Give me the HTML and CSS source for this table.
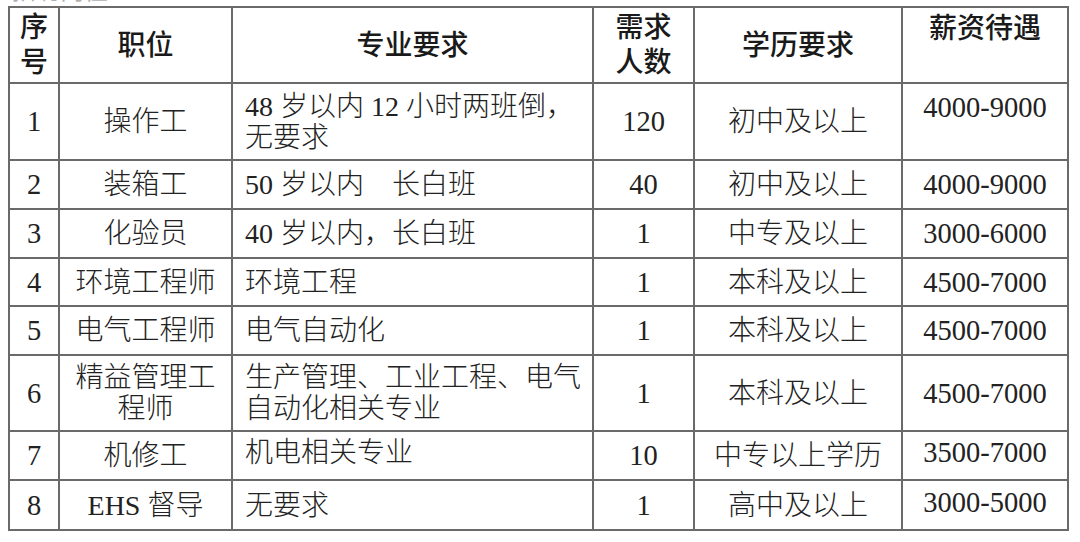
FILE: index.html
```html
<!DOCTYPE html>
<html lang="zh-CN">
<head>
<meta charset="utf-8">
<title>招聘岗位</title>
<link rel="stylesheet" href="styles.css">
</head>
<body>
<div class="caption"><span class="caption-text">招聘岗位：</span></div>
<table class="jobs">
  <colgroup>
    <col class="c-no"><col class="c-pos"><col class="c-req"><col class="c-num"><col class="c-edu"><col class="c-pay">
  </colgroup>
  <thead>
    <tr class="h-tall">
      <th class="stack">序<br>号</th>
      <th>职位</th>
      <th>专业要求</th>
      <th class="stack">需求<br>人数</th>
      <th>学历要求</th>
      <th class="top">薪资待遇</th>
    </tr>
  </thead>
  <tbody>
    <tr class="h-tall2">
      <td class="num">1</td>
      <td>操作工</td>
      <td class="left"><span class="lat">48 </span>岁以内<span class="lat"> 12 </span>小时两班倒，<br>无要求</td>
      <td class="num">120</td>
      <td>初中及以上</td>
      <td class="num top">4000-9000</td>
    </tr>
    <tr class="h-49">
      <td class="num">2</td>
      <td>装箱工</td>
      <td class="left"><span class="lat">50 </span>岁以内　长白班</td>
      <td class="num">40</td>
      <td>初中及以上</td>
      <td class="num">4000-9000</td>
    </tr>
    <tr class="h-49">
      <td class="num">3</td>
      <td>化验员</td>
      <td class="left"><span class="lat">40 </span>岁以内，长白班</td>
      <td class="num">1</td>
      <td>中专及以上</td>
      <td class="num">3000-6000</td>
    </tr>
    <tr class="h-48">
      <td class="num">4</td>
      <td>环境工程师</td>
      <td class="left">环境工程</td>
      <td class="num">1</td>
      <td>本科及以上</td>
      <td class="num">4500-7000</td>
    </tr>
    <tr class="h-49">
      <td class="num">5</td>
      <td>电气工程师</td>
      <td class="left">电气自动化</td>
      <td class="num">1</td>
      <td>本科及以上</td>
      <td class="num">4500-7000</td>
    </tr>
    <tr class="h-tall">
      <td class="num">6</td>
      <td>精益管理工<br>程师</td>
      <td class="left">生产管理、工业工程、电气<br>自动化相关专业</td>
      <td class="num">1</td>
      <td>本科及以上</td>
      <td class="num">4500-7000</td>
    </tr>
    <tr class="h-49">
      <td class="num">7</td>
      <td>机修工</td>
      <td class="left up">机电相关专业</td>
      <td class="num">10</td>
      <td>中专以上学历</td>
      <td class="num up">3500-7000</td>
    </tr>
    <tr class="h-50">
      <td class="num">8</td>
      <td><span class="lat">EHS </span>督导</td>
      <td class="left">无要求</td>
      <td class="num">1</td>
      <td>高中及以上</td>
      <td class="num up">3000-5000</td>
    </tr>
  </tbody>
</table>
</body>
</html>
```

FILE: styles.css
```css
html, body {
  margin: 0;
  padding: 0;
  background: #ffffff;
}

body {
  font-family: "Liberation Serif", "Noto Sans CJK SC", serif;
  color: #222222;
}

.caption {
  height: 6px;
  overflow: hidden;
  padding-left: 12px;
}

.caption-text {
  display: block;
  margin-top: -25px;
  font-family: "Noto Sans CJK SC", sans-serif;
  font-size: 24px;
  line-height: 28px;
  color: #b0b0b0;
}

.jobs {
  margin-left: 8px;
  width: 1061px;
  table-layout: fixed;
  border-collapse: collapse;
  border: 2px solid #6a6a6a;
}

.c-no { width: 50px; }
.c-pos { width: 173px; }
.c-req { width: 361px; }
.c-num { width: 101px; }
.c-edu { width: 208px; }
.c-pay { width: 166px; }

.jobs th,
.jobs td {
  border: 2px solid #6a6a6a;
  padding: 0;
  text-align: center;
  vertical-align: middle;
  font-size: 28px;
  line-height: 31px;
  font-weight: 300;
  font-family: "Liberation Serif", "Noto Sans CJK SC", serif;
}

.jobs th {
  font-family: "Liberation Serif", "Noto Sans CJK SC", sans-serif;
  font-weight: 500;
  color: #1a1a1a;
}

.jobs th.stack {
  line-height: 35px;
}

.jobs .top {
  vertical-align: top;
  padding-top: 5px;
}

.jobs td.num.top {
  padding-top: 8px;
}

.jobs .up {
  padding-bottom: 6px;
}

.jobs td.left {
  text-align: left;
  padding-left: 12px;
}

.jobs td.num {
  font-size: 28.5px;
}

.lat {
  font-family: "Liberation Serif", serif;
}

.h-tall { height: 76px; }
.h-tall2 { height: 77px; }
.h-48 { height: 48px; }
.h-49 { height: 49px; }
.h-50 { height: 50px; }
```
